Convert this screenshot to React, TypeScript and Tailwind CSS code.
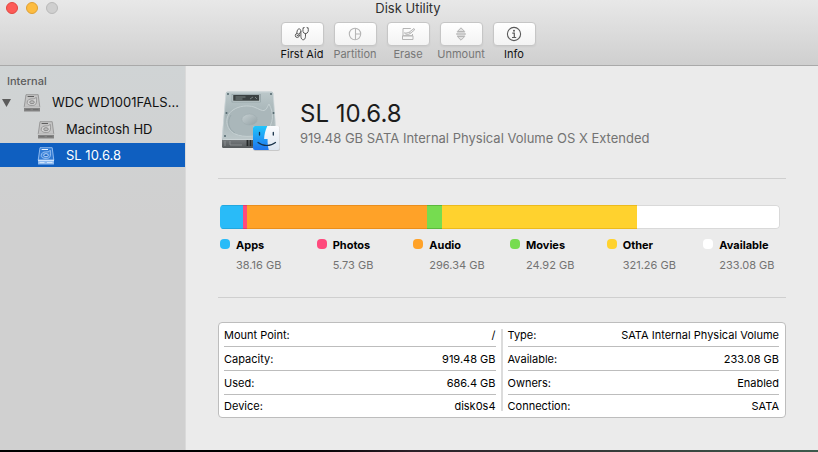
import React, { useState } from 'react';

interface Category {
  name: string;
  size: number;
  color: string;
  edge: string;
}

const categories: Category[] = [
  { name: 'Apps', size: 38.16, color: 'bg-[#29bbf8]', edge: 'border-[#22a7de]' },
  { name: 'Photos', size: 5.73, color: 'bg-[#ff4a7d]', edge: 'border-[#e0406d]' },
  { name: 'Audio', size: 296.34, color: 'bg-[#ffa228]', edge: 'border-[#ea8e1c]' },
  { name: 'Movies', size: 24.92, color: 'bg-[#76dc50]', edge: 'border-[#5cb83c]' },
  { name: 'Other', size: 321.26, color: 'bg-[#ffd22e]', edge: 'border-[#ecba1d]' },
  { name: 'Available', size: 233.08, color: 'bg-white', edge: 'border-[#d9d9d9]' },
];

const leftInfo = [
  ['Mount Point:', '/'],
  ['Capacity:', '919.48 GB'],
  ['Used:', '686.4 GB'],
  ['Device:', 'disk0s4'],
];

const rightInfo = [
  ['Type:', 'SATA Internal Physical Volume'],
  ['Available:', '233.08 GB'],
  ['Owners:', 'Enabled'],
  ['Connection:', 'SATA'],
];

const FirstAidIcon = () => (
  <svg width="16" height="16" viewBox="0 0 16 16" fill="none" stroke="currentColor" strokeWidth="1" strokeLinecap="round">
    <path d="M9.2 2C8.4 4.4 8.8 7.6 11.500 7.600S15 4.400 14 2M9.200 2l1-.4M14 2l-1-.4" />
    <path d="M11.500 7.600v2.600c0 4.800-4.600 4.800-4.600 0V5.400c0-3.400-3.300-3.200-3.700-.4L2.700 7.400" />
    <path d="M6.900 5.400 5.300 8" />
    <circle cx="3.300" cy="9.500" r="2" />
    <circle cx="3.300" cy="9.500" r=".3" />
  </svg>
);

const PartitionIcon = () => (
  <svg width="16" height="16" viewBox="0 0 16 16" fill="none" stroke="currentColor" strokeWidth="1.1">
    <circle cx="8" cy="8" r="5.7" />
    <path d="M8.500 2.300v11.400M8.500 8h5.200" />
  </svg>
);

const EraseIcon = () => (
  <svg width="16" height="16" viewBox="0 0 16 16" fill="none" stroke="currentColor" strokeWidth="1" strokeLinejoin="round">
    <path d="M10.800 2.500H3v7.300h9.500V8" />
    <path d="M2.500 9.800h10.500v3.700H2.500z" />
    <path d="M14 2.500 9.400 6c-1.600 1-3.400 1.200-5 .9 1.200 1.700 4.200 2 5.800.6l4.400-3.600z" fill="#f6f6f6" />
    <path d="m9.400 6 1.200 1.400" />
  </svg>
);

const UnmountIcon = () => (
  <svg width="16" height="16" viewBox="0 0 16 16" fill="none" stroke="currentColor" strokeWidth="1" strokeLinejoin="round">
    <path d="M8 1.800 11.700 5.500H4.300zM8 14.200 4.300 10.500h7.400z" fill="currentColor" fillOpacity=".35" />
    <rect x="3.8" y="7" width="8.4" height="2" rx=".6" fill="currentColor" fillOpacity=".35" />
  </svg>
);

const InfoIcon = () => (
  <svg width="16" height="16" viewBox="0 0 16 16" fill="none" stroke="currentColor" strokeWidth="1.1">
    <circle cx="8" cy="8" r="6.6" />
    <circle cx="8" cy="4.7" r="1" fill="currentColor" stroke="none" />
    <path d="M6.300 7.100h2v4.300M6 11.500h4.200" strokeWidth="1.2" />
  </svg>
);

const tools = [
  { label: 'First Aid', icon: <FirstAidIcon />, enabled: true },
  { label: 'Partition', icon: <PartitionIcon />, enabled: false },
  { label: 'Erase', icon: <EraseIcon />, enabled: false },
  { label: 'Unmount', icon: <UnmountIcon />, enabled: false },
  { label: 'Info', icon: <InfoIcon />, enabled: true },
];

const DriveIcon = ({ active = false }: { active?: boolean }) => {
  const line = active ? '#a9cdf8' : '#8b8b8b';
  return (
    <svg className="shrink-0" width="18" height="18" viewBox="0 0 18 18" fill="none">
      <path d="M3 .7h12.200l1.600 12.500H1.200z" fill={active ? '#3079d2' : '#c4c4c4'} stroke={line} strokeWidth=".8" strokeLinejoin="round" />
      <path d="M1 13h16v4q0 .5-.5.5h-15Q1 17.500 1 17z" fill={active ? '#8dbaf0' : '#838383'} />
      <path d="M1 13.300h16" stroke={active ? '#e6f2ff' : '#dedede'} strokeWidth=".9" />
      <path d="M4.600 2.500h6.400" stroke={active ? '#e6f2ff' : '#5e5e5e'} strokeWidth="1" />
      <path d="M13.200 3.300c.8 5.200.4 8.200-4 8.200-3.500 0-5.200-1.200-5-3.300.2-2.200 2-3.300 4.600-3.300 2.200 0 3.500-.2 4.400-1.600z" fill={active ? '#4389dd' : '#d2d2d2'} stroke={line} strokeWidth=".8" />
      <ellipse cx="9" cy="8.2" rx="2.3" ry="1.5" fill={active ? '#1c66c4' : '#bcbcbc'} stroke={active ? '#d4e7ff' : '#7b7b7b'} strokeWidth=".8" />
      <path d="M2.500 15.600h5M10 15.600h5.500" stroke={active ? '#e6f2ff' : '#686868'} strokeWidth=".8" />
    </svg>
  );
};

const VolumeIcon = () => (
  <svg className="shrink-0" width="62" height="62" viewBox="0 0 62 62" fill="none">
    <defs>
      <linearGradient id="plate" x1="0" y1="0" x2="0" y2="1">
        <stop offset="0" stopColor="#bcc8ca" />
        <stop offset=".5" stopColor="#a5b3b6" />
        <stop offset="1" stopColor="#bcc7c9" />
      </linearGradient>
      <linearGradient id="front" x1="0" y1="0" x2="0" y2="1">
        <stop offset="0" stopColor="#7c8083" />
        <stop offset="1" stopColor="#55595b" />
      </linearGradient>
      <linearGradient id="disc" x1="0" y1="0" x2="1" y2="1">
        <stop offset="0" stopColor="#c6d0d2" />
        <stop offset="1" stopColor="#94a2a6" />
      </linearGradient>
      <linearGradient id="faceBlue" x1="0" y1="0" x2="0" y2="1">
        <stop offset="0" stopColor="#22c5fb" />
        <stop offset="1" stopColor="#1f74ee" />
      </linearGradient>
      <linearGradient id="faceWhite" x1="0" y1="0" x2="0" y2="1">
        <stop offset="0" stopColor="#fbfcfe" />
        <stop offset="1" stopColor="#dce5f0" />
      </linearGradient>
    </defs>
    <path d="M2 48h54v8.500q0 1.500-1.500 1.500h-51Q2 58 2 56.500z" fill="url(#front)" />
    <path d="M7.500 1.500h44q1.500 0 1.700 1.500L56.500 48q0 1.800-2 1.800H3.700Q1.700 49.800 1.900 48L5.800 3Q6 1.500 7.500 1.500z" fill="url(#plate)" />
    <path d="M7.500 2h44.200M6 3 2.200 48.500M53.200 3l3 45" stroke="#d0d9db" strokeWidth=".7" />
    <path d="M2.200 49.500h54" stroke="#d3dcde" strokeWidth=".8" />
    <rect x="12" y="4.5" width="28.5" height="7.5" fill="#c3cdcf" stroke="#87979b" strokeWidth=".6" />
    <rect x="13.2" y="5" width="26" height="5.7" rx=".5" fill="#3b4142" />
    <path d="M15.500 7h10M15.500 9h7M30 9l3-2M35 7l2 2" stroke="#8b9496" strokeWidth=".8" />
    <path d="M49 14c5 9 5 20-3 27-7 6-22 7-31 3C5 39 4 26 13 20c6-4.200 15-5 21-3 5 2 8 4 10 3.500 3-.8 3-3.500 5-6.500z" fill="#aab7ba" stroke="#c5d0d2" strokeWidth="1" />
    <path d="M11 25c-4 6-3 14 4 18" stroke="#8a9a9e" strokeWidth=".5" />
    <ellipse cx="29.5" cy="29.5" rx="7.7" ry="5.5" fill="url(#disc)" stroke="#a0adb0" strokeWidth=".6" />
    {[[8, 4], [51, 4], [6.5, 23], [53.5, 23], [5, 46]].map(([x, y]) => (
      <circle key={`${x}-${y}`} cx={x} cy={y} r="1" fill="#52666c" />
    ))}
    <path d="M5 51v5M10 51v4h12" stroke="#9b9fa1" strokeWidth=".7" />
    <path d="M27.500 50v6M30.500 50v6M33.500 50v6" stroke="#252829" strokeWidth="1.8" />
    <g>
      <rect x="33.3" y="36.3" width="26.7" height="24.7" rx="2" fill="#000" fillOpacity=".15" />
      <rect x="33" y="36" width="26.5" height="24" rx="2" fill="url(#faceWhite)" />
      <path d="M35 36h12.300c-2 4.500-3 8.500-3.200 13h3.500c-.1 4 .3 7.500 1.200 11H35q-2 0-2-2V38q0-2 2-2z" fill="url(#faceBlue)" />
      <path d="M39.500 42.500v2.500M53.300 42.500v2.500" stroke="#173149" strokeWidth="1.3" strokeLinecap="round" />
      <path d="M38 52.500c5 4 12.500 4 17.500 0" stroke="#173149" strokeWidth="1.2" strokeLinecap="round" />
    </g>
  </svg>
);

const InfoTable = ({ rows }: { rows: string[][] }) => (
  <table className="w-full border-separate border-spacing-0 text-[11px] leading-4 text-black">
    <tbody>
      {rows.map(([label, value]) => (
        <tr key={label} className="group h-6 last:h-[22px]">
          <th scope="row" className="border-b border-[#bdbdbd] p-0 text-left font-normal group-last:border-b-0">{label}</th>
          <td className="border-b border-[#bdbdbd] p-0 text-right whitespace-nowrap group-last:border-b-0">{value}</td>
        </tr>
      ))}
    </tbody>
  </table>
);

const volumes = ['Macintosh HD', 'SL 10.6.8'];

const App: React.FC = () => {
  const [selected, setSelected] = useState('SL 10.6.8');

  return (
    <div className="min-h-screen flex flex-col bg-linear-to-r from-black from-30% via-[#2b2028] via-50% to-[#3d5a4c] pb-0.5 font-['Inter',sans-serif]">
      <header className="relative h-[66px] bg-linear-to-b from-[#e8e8e8] to-[#cfcfcf] border-b border-[#a9a9a9] pr-0.5">
        <div className="absolute left-1.5 top-0.5 flex gap-2">
          <button aria-label="Close" className="size-3 rounded-full bg-[#fd5b57] border border-[#e2463f]" />
          <button aria-label="Minimize" className="size-3 rounded-full bg-[#fdbc40] border border-[#dfa033]" />
          <button aria-label="Zoom" disabled className="size-3 rounded-full bg-[#cfcfcf] border border-[#b9b9b9]" />
        </div>
        <h1 className="text-center text-[13px] leading-4 text-[#2f2f2f]">Disk Utility</h1>
        <div className="mt-1.5 flex justify-center">
          {tools.map(tool => (
            <button
              key={tool.label}
              disabled={!tool.enabled}
              className="group w-[53px] flex flex-col items-center text-[11px] leading-4 text-[#111] disabled:text-[#777]"
            >
              <span className="flex h-6 w-[43px] items-center justify-center rounded-sm border border-[#c6c6c6] bg-linear-to-b from-white to-[#f3f3f3] text-[#5a5a5a] shadow-xs group-disabled:text-[#b5b5b5]">
                {tool.icon}
              </span>
              <span className="whitespace-nowrap">{tool.label}</span>
            </button>
          ))}
        </div>
      </header>

      <div className="flex flex-1">
        <nav className="w-[186px] shrink-0 border-r border-[#dadada] bg-[#d0d0d0] bg-linear-to-b from-[#d0d4d5] to-[#d0d0d0] to-40% pt-[7px] text-[13px] text-[#111]">
          <h2 className="px-[7px] text-[11px] leading-4 font-medium text-[#5c5c5c]">Internal</h2>
          <ul className="mt-0.5 flex flex-col gap-0.5">
            <li>
              <button className="flex h-6 w-full items-center pl-0.5 text-left">
                <svg className="shrink-0" width="9" height="8" viewBox="0 0 9 8"><path d="M0 0h9L4.500 8z" fill="#5c5c5c" /></svg>
                <span className="ml-3"><DriveIcon /></span>
                <span className="ml-[11px] min-w-0 whitespace-nowrap">WDC WD1001FALS...</span>
              </button>
            </li>
            {volumes.map(name => (
              <li key={name}>
                <button
                  onClick={() => setSelected(name)}
                  className={`flex h-6 w-full items-center gap-[11px] pt-px pl-[37px] text-left ${selected === name ? 'bg-[#0f5fc0] text-white' : ''}`}
                >
                  <DriveIcon active={selected === name} />
                  {name}
                </button>
              </li>
            ))}
          </ul>
        </nav>

        <main className="min-w-0 flex-1 bg-[#ebebeb] pt-6 px-8 pb-6">
          <section className="flex gap-[18px] pb-[26px] pl-0.5">
            <VolumeIcon />
            <div className="pt-2">
              <h2 className="text-2xl leading-8 text-[#1c1c1c]">SL 10.6.8</h2>
              <p className="text-[13px] leading-4 text-[#737373]">919.48 GB SATA Internal Physical Volume OS X Extended</p>
            </div>
          </section>

          <section className="border-y border-[#cfcfcf] pt-[26px] pr-1.5 pb-6 pl-0.5">
            <div className="flex h-6 overflow-hidden rounded">
              {categories.map(c => (
                <div
                  key={c.name}
                  className={`basis-0 border-y last:rounded-r last:border-r ${c.color} ${c.edge}`}
                  style={{ flexGrow: c.size }}
                />
              ))}
            </div>
            <ul className="mt-2 -mr-5 grid grid-cols-6 text-[11px] leading-4">
              {categories.map(c => (
                <li key={c.name} className="flex gap-1.5">
                  <span className={`mt-0.5 size-2.5 shrink-0 rounded-[4px] ${c.color}`} />
                  <div>
                    <div className="font-bold text-black">{c.name}</div>
                    <div className="mt-1 whitespace-nowrap text-[#737373]">{c.size} GB</div>
                  </div>
                </li>
              ))}
            </ul>
          </section>

          <section className="mt-6 flex rounded-sm border border-[#bdbdbd] bg-white pr-1.5 pl-[5px]">
            <div className="min-w-0 flex-1"><InfoTable rows={leftInfo} /></div>
            <div className="mx-[5px] my-1.5 w-0.5 bg-[#dcdcdc]" />
            <div className="min-w-0 flex-1"><InfoTable rows={rightInfo} /></div>
          </section>
        </main>
      </div>
    </div>
  );
};

export default App;
